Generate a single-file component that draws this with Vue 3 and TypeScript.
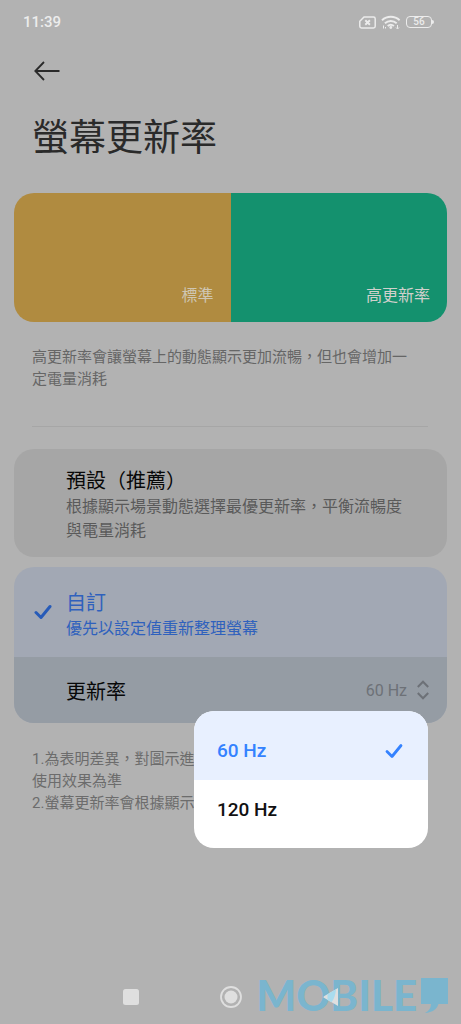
<script setup lang="ts">
import { ref } from 'vue'

const modes = [
  { id: 'default', title: '預設（推薦）', text: '根據顯示場景動態選擇最優更新率，平衡流暢度與電量消耗' },
  { id: 'custom', title: '自訂', text: '優先以設定值重新整理螢幕' },
]
const rates = ['60 Hz', '120 Hz']
const notes = ['1.為表明差異，對圖示進', '使用效果為準', '2.螢幕更新率會根據顯示']

const mode = ref('custom')
const rate = ref('60 Hz')
const menuOpen = ref(true)

function pick(value: string) {
  rate.value = value
  menuOpen.value = false
}
</script>

<template>
  <div class="screen">
    <header class="status">
      <span>11:39</span>
      <div class="status-icons">
        <svg width="17" height="13" viewBox="0 0 17 13" fill="none" stroke="currentColor" stroke-width="1.500">
          <path d="M5 1h9.500a1.700 1.700 0 0 1 1.700 1.700v7.600a1.700 1.700 0 0 1-1.700 1.700h-12A1.700 1.700 0 0 1 .8 10.300V5.200z" />
          <path d="M6.300 4.300l4.600 4.400M10.900 4.300L6.300 8.700" stroke-width="1.900" />
        </svg>
        <svg width="20" height="15" viewBox="0 0 20 15" fill="none" stroke="currentColor" stroke-width="1.900">
          <path d="M1 5.200a13 13 0 0 1 17.600 0M3.900 8.200a8.800 8.800 0 0 1 11.800 0M6.700 11a4.800 4.800 0 0 1 6.200 0" />
          <circle cx="9.800" cy="12.500" r="1.400" fill="currentColor" stroke="none" />
          <path d="M2.500 10.500v3M4.500 12v1.500M16.500 10v3.500M15 12.500l1.500 1.500 1.500-1.500" stroke-width="1" />
        </svg>
        <span class="battery"><span class="battery-body">56</span></span>
      </div>
    </header>

    <button class="back" type="button" aria-label="返回">
      <svg width="26" height="20" viewBox="0 0 26 20" fill="none" stroke="currentColor" stroke-width="1.800">
        <path d="M25.500 10H1.500M10 1L1.300 10l8.700 9" />
      </svg>
    </button>

    <h1>螢幕更新率</h1>

    <div class="demo">
      <div class="pane standard">標準</div>
      <div class="pane high">高更新率</div>
    </div>

    <p class="intro">高更新率會讓螢幕上的動態顯示更加流暢，但也會增加一定電量消耗</p>
    <hr />

    <main class="cards">
      <section v-for="m in modes" :key="m.id" class="card" :class="{ selected: mode === m.id }">
        <label class="mode">
          <input v-model="mode" type="radio" name="mode" :value="m.id" />
          <span class="tick">
            <svg v-if="mode === m.id" width="18" height="16" viewBox="0 0 18 16" fill="none" stroke="currentColor" stroke-width="3" stroke-linecap="round" stroke-linejoin="round">
              <path d="M2 8.500l5 5L16 2.500" />
            </svg>
          </span>
          <span class="mode-text">
            <span class="mode-title">{{ m.title }}</span>
            <span class="mode-sub">{{ m.text }}</span>
          </span>
        </label>

        <div v-if="m.id === 'custom'" class="rate-row">
          <label for="rate">更新率</label>
          <select id="rate" v-model="rate">
            <option v-for="r in rates" :key="r">{{ r }}</option>
          </select>
          <svg class="updown" width="12" height="20" viewBox="0 0 12 20" fill="none" stroke="currentColor" stroke-width="2">
            <path d="M.8 7L6 1.700 11.200 7M.8 13L6 18.300 11.200 13" />
          </svg>

          <div v-if="menuOpen" class="menu" role="listbox" aria-label="更新率">
            <button
              v-for="r in rates"
              :key="r"
              type="button"
              role="option"
              :aria-selected="rate === r"
              :class="{ active: rate === r }"
              @click="pick(r)"
            >
              <span>{{ r }}</span>
              <svg v-if="rate === r" width="18" height="16" viewBox="0 0 18 16" fill="none" stroke="currentColor" stroke-width="2.800" stroke-linecap="round" stroke-linejoin="round">
                <path d="M2 8.500l5 5L16 2.500" />
              </svg>
            </button>
          </div>
        </div>
      </section>
    </main>

    <div class="notes">
      <p v-for="n in notes" :key="n">{{ n }}</p>
    </div>

    <nav class="navbar">
      <div class="brand">
        <span>MOBILE</span>
        <svg width="27" height="35" viewBox="0 0 27 35" fill="currentColor">
          <path d="M0 0h27v26H17.500c-1.500 5-6 8.500-13.500 9 4-2 6-5 6-9H0z" />
        </svg>
      </div>
      <button type="button" aria-label="最近使用">
        <svg width="16" height="16" viewBox="0 0 16 16"><rect width="16" height="16" rx="2.500" fill="#dfdfdf" /></svg>
      </button>
      <button type="button" aria-label="主畫面">
        <svg width="24" height="24" viewBox="0 0 24 24">
          <circle cx="12" cy="12" r="10" fill="none" stroke="#dfdfdf" stroke-width="1.800" />
          <circle cx="12" cy="12" r="6.500" fill="#dfdfdf" />
        </svg>
      </button>
      <button type="button" aria-label="返回上一頁">
        <svg width="16" height="20" viewBox="0 0 16 20">
          <path d="M15 1v18L1 10.800a1 1 0 0 1 0-1.600z" fill="#dfdfdf" />
          <path d="M13 2.200L4.500 7.200v5.700l4 2.300C11 12 12.500 8 13 2.200z" fill="#aadcee" />
        </svg>
      </button>
    </nav>
  </div>
</template>

<style>
body {
  margin: 0;
  background: #b2b2b2;
}
</style>

<style scoped>
.screen {
  display: flex;
  flex-direction: column;
  min-height: 100vh;
  box-sizing: border-box;
  background: #b2b2b2;
  color: #2a2a2a;
  font-family: Roboto, "Noto Sans CJK TC", sans-serif;
}
button {
  border: 0;
  padding: 0;
  background: none;
  color: inherit;
  font: inherit;
}
svg {
  display: block;
  flex: none;
}
p {
  margin: 0;
}
.status {
  display: flex;
  align-items: center;
  justify-content: space-between;
  height: 20px;
  padding: 12px 27px 0 23px;
  color: #ececec;
  font-size: 15px;
  font-weight: 500;
}
.status-icons {
  display: flex;
  align-items: center;
  gap: 5px;
}
.battery {
  display: flex;
  align-items: center;
}
.battery-body {
  width: 24px;
  height: 10px;
  border: 1px solid;
  border-radius: 4px;
  font-size: 10px;
  line-height: 10px;
  text-align: center;
}
.battery::after {
  content: "";
  width: 2px;
  height: 4px;
  border-radius: 0 2px 2px 0;
  background: currentColor;
}
.back {
  align-self: flex-start;
  margin: 29px 0 0 34px;
}
h1 {
  margin: 30px 32px 0;
  font-size: 37px;
  line-height: 56px;
  font-weight: 400;
}
.demo {
  display: flex;
  height: 129px;
  margin: 26px 14px 0;
  border-radius: 20px;
  overflow: hidden;
}
.pane {
  flex: 1;
  display: flex;
  align-items: flex-end;
  justify-content: flex-end;
  padding: 0 17px 14px 0;
  color: #d0d0cc;
  font-size: 16px;
  line-height: 24px;
}
.standard {
  background: #b08b40;
  color: #cfc6b2;
}
.high {
  background: #14916e;
}
.intro,
.notes {
  margin: 24px 44px 0 32px;
  color: #666;
  font-size: 15px;
  line-height: 22px;
}
hr {
  width: auto;
  height: 1px;
  margin: 36px 33px 22px 32px;
  border: 0;
  background: #a6a6a6;
}
.cards {
  display: flex;
  flex-direction: column;
  gap: 10px;
  margin: 0 14px;
}
.card {
  border-radius: 20px;
  background: #a6a6a6;
}
.mode {
  position: relative;
  display: flex;
  align-items: center;
  padding: 18px 36px 14px 20px;
}
.mode input {
  position: absolute;
  width: 1px;
  height: 1px;
  margin: 0;
  opacity: 0;
}
.tick {
  width: 32px;
  color: #275bb8;
}
.mode-text {
  flex: 1;
  display: flex;
  flex-direction: column;
}
.mode-title {
  color: #080808;
  font-size: 20px;
  line-height: 28px;
}
.mode-sub {
  color: #5a5a5a;
  font-size: 16px;
  line-height: 24px;
}
.selected {
  background: #a2a8b4;
}
.selected .mode {
  padding-top: 16px;
  padding-bottom: 16px;
}
.selected .mode-text {
  padding-top: 6px;
}
.selected .mode-title,
.selected .mode-sub {
  color: #2f61bd;
}
.rate-row {
  position: relative;
  display: flex;
  align-items: center;
  height: 66px;
  padding: 0 18px 0 52px;
  border-radius: 0 0 20px 20px;
  background: #959ca4;
}
.rate-row label {
  flex: 1;
  color: #080808;
  font-size: 20px;
}
select {
  appearance: none;
  border: 0;
  margin: 0 10px 0 0;
  padding: 0;
  background: none;
  color: #6d7177;
  font-family: inherit;
  font-size: 16px;
  text-align-last: right;
}
.updown {
  color: #6d7177;
}
.menu {
  position: absolute;
  top: 54px;
  right: 19px;
  width: 234px;
  border-radius: 20px;
  background: #fff;
  overflow: hidden;
}
.menu button {
  display: flex;
  align-items: center;
  justify-content: space-between;
  box-sizing: content-box;
  width: 186px;
  height: 59px;
  padding: 0 25px 0 23px;
  color: #111;
  font-size: 19px;
  font-weight: 500;
}
.menu button:first-child {
  padding-top: 10px;
}
.menu button:last-child {
  padding-bottom: 9px;
}
.menu .active {
  background: #e8f0ff;
  color: #3482ff;
}
.notes {
  margin-top: 25px;
  color: #6c6c6c;
}
.navbar {
  position: relative;
  display: flex;
  justify-content: center;
  height: 54px;
  margin-top: auto;
}
.navbar button {
  position: relative;
  display: flex;
  align-items: center;
  justify-content: center;
  width: 100px;
}
.brand {
  position: absolute;
  right: 13px;
  bottom: 11px;
  display: flex;
  align-items: center;
  gap: 4px;
  color: #7ab5ce;
  font-family: Lato, sans-serif;
  font-size: 42px;
  line-height: 35px;
  font-weight: 900;
}
</style>
